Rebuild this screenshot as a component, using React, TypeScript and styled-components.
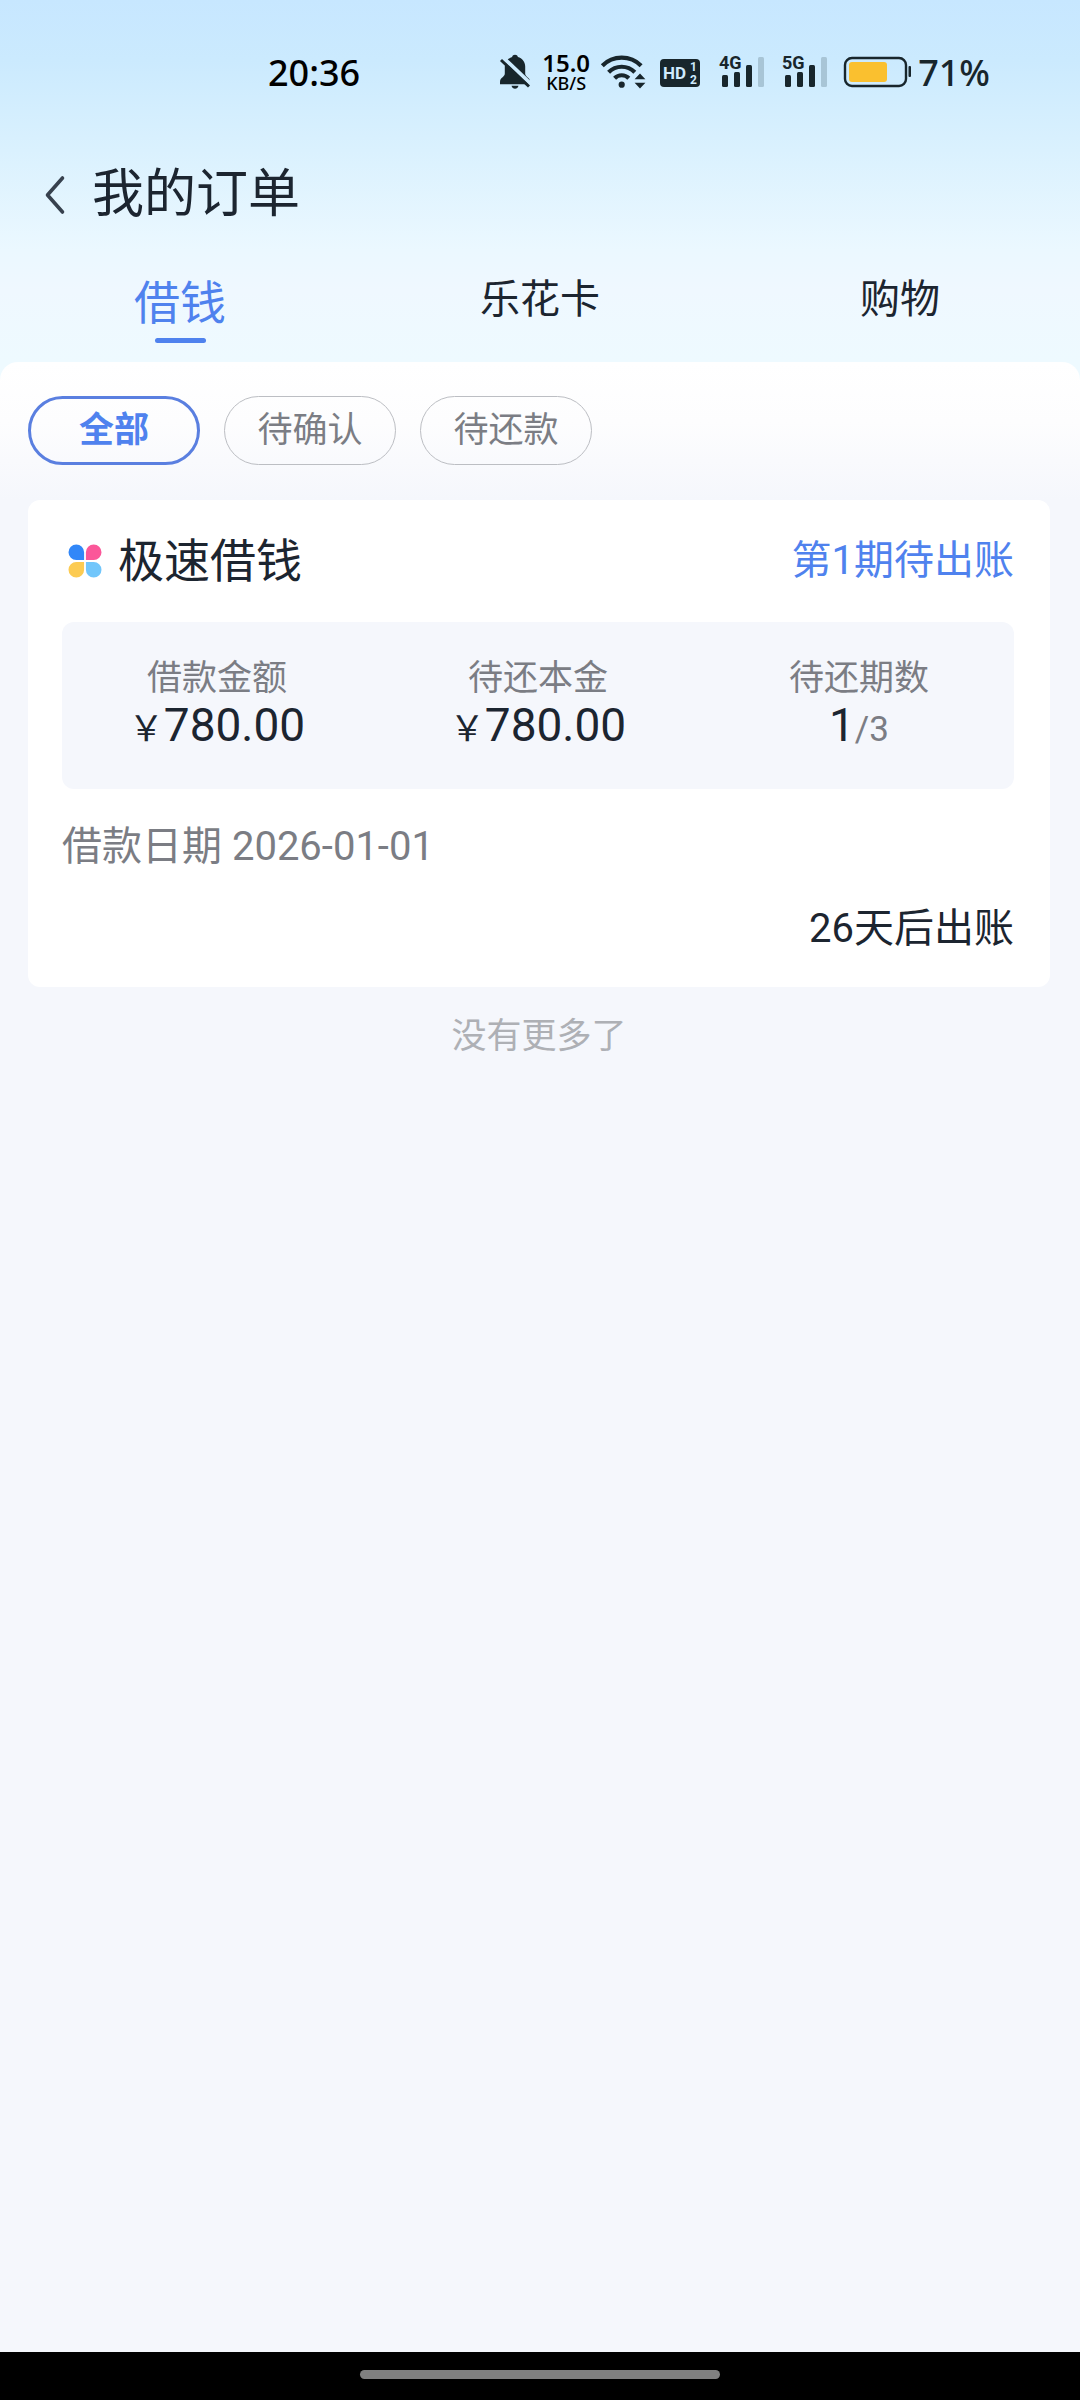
import React, { useState } from 'react';
import styled, { createGlobalStyle } from 'styled-components';

const ink = '#1c2530';
const statusInk = '#18262c';
const blue = '#4f82ee';
const grey = '#7b7d84';
const surface = '#f5f7fc';

const GlobalStyle = createGlobalStyle`
  * { box-sizing: border-box; }
  body {
    margin: 0;
    background: ${surface};
    color: ${ink};
    font-family: Roboto, "Noto Sans CJK SC", sans-serif;
  }
  button {
    margin: 0;
    padding: 0;
    border: 0;
    background: none;
    color: inherit;
    font: inherit;
    cursor: pointer;
  }
  svg { display: block; overflow: visible; }
`;

const Page = styled.div`
  display: flex;
  flex-direction: column;
  min-height: 100vh;
`;

const Top = styled.header`
  background: linear-gradient(180deg, #c7e7ff 0, #cbeafe 60px, #daf1fe 150px, #ebf8ff 250px, #eff8ff 290px, #eefaff 100%);
`;

const StatusBar = styled.div`
  display: flex;
  align-items: center;
  justify-content: space-between;
  height: 146px;
  padding: 0 90px 0 268px;
  font-family: "Noto Sans", sans-serif;
  font-weight: 500;
  font-size: 36px;
  line-height: 40px;
  color: ${statusInk};
`;

const Clock = styled.time`
  color: #000;
`;

const StatusIcons = styled.div`
  display: flex;
  align-items: center;
  gap: 12px;
`;

const NetSpeed = styled.div`
  display: flex;
  flex-direction: column;
  align-items: center;
  width: 46px;
  line-height: 20px;
  font-size: 18px;
  color: #000;
`;

const NetValue = styled.span`
  font-size: 24px;
  font-weight: 600;
`;

const TitleBar = styled.div`
  display: flex;
  align-items: center;
  gap: 26px;
  height: 98px;
  padding-left: 44px;
`;

const PageTitle = styled.h1`
  margin: 0;
  font-size: 52px;
  line-height: 64px;
  font-weight: 400;
`;

const Tabs = styled.nav`
  display: grid;
  grid-template-columns: repeat(3, 1fr);
  height: 118px;
  padding-top: 24px;
`;

const Tab = styled.button<{ $active: boolean }>`
  display: flex;
  flex-direction: column;
  align-items: center;
  height: 76px;
  font-size: ${(p) => (p.$active ? 46 : 40)}px;
  line-height: ${(p) => (p.$active ? 70 : 64)}px;
  color: ${(p) => (p.$active ? blue : ink)};

  &::after {
    content: "";
    display: ${(p) => (p.$active ? 'block' : 'none')};
    width: 51px;
    height: 5px;
    border-radius: 3px;
    background: ${blue};
  }
`;

const Panel = styled.div`
  background: #eefaff;
`;

const Filters = styled.div`
  display: flex;
  gap: 24px;
  padding: 34px 28px 35px;
  border-radius: 18px 18px 0 0;
  background: linear-gradient(180deg, #fff 0, #fdfdfe 60px, ${surface} 100%);
`;

const Chip = styled.button<{ $active: boolean }>`
  display: flex;
  align-items: center;
  justify-content: center;
  width: 172px;
  height: 69px;
  border: ${(p) => (p.$active ? `3px solid #5a7fe0` : '1px solid #bcbec3')};
  border-radius: 35px;
  font-size: 35px;
  line-height: 50px;
  font-weight: ${(p) => (p.$active ? 700 : 400)};
  color: ${(p) => (p.$active ? blue : grey)};
`;

const Orders = styled.main`
  flex: 1;
  padding: 0 30px 0 28px;
`;

const Card = styled.article`
  padding: 0 36px 34px 34px;
  border-radius: 12px;
  background: #fff;
`;

const CardHead = styled.div`
  display: flex;
  align-items: center;
  gap: 16px;
  height: 122px;
  padding-left: 6px;
`;

const CardTitle = styled.h2`
  margin: 0;
  font-size: 46px;
  line-height: 60px;
  font-weight: 400;
`;

const OrderState = styled.span`
  margin-left: auto;
  font-size: 40px;
  line-height: 60px;
  color: ${blue};
`;

const Stats = styled.dl`
  display: flex;
  justify-content: space-between;
  margin: 0;
  padding: 33px 65px 40px;
  border-radius: 12px;
  background: ${surface};
`;

const Stat = styled.div`
  width: 180px;
  text-align: center;
  line-height: 47px;
  white-space: nowrap;
`;

const StatLabel = styled.dt`
  font-size: 35px;
  color: ${grey};
`;

const StatValue = styled.dd`
  margin: 0;
  font-size: 46px;
`;

const Small = styled.span<{ $muted?: boolean }>`
  font-size: 35px;
  line-height: 1;
  color: ${(p) => (p.$muted ? grey : 'inherit')};
`;

const DateRow = styled.p`
  margin: 0;
  font-size: 40px;
  line-height: 116px;
  color: ${grey};
`;

const DueRow = styled.p`
  margin: 0;
  font-size: 40px;
  line-height: 48px;
  text-align: right;
`;

const ListEnd = styled.p`
  margin: 0;
  padding: 25px 0;
  font-size: 35px;
  line-height: 50px;
  text-align: center;
  color: #aeb0b5;
`;

const GestureBar = styled.footer`
  display: flex;
  justify-content: center;
  height: 48px;
  padding-top: 18px;
  background: #000;
`;

const GesturePill = styled.div`
  width: 33.3333%;
  height: 9px;
  border-radius: 5px;
  background: #808080;
`;

const Glyph = styled.text`
  font-family: Roboto, sans-serif;
  font-weight: 700;
`;

const MutedBell = () => (
  <svg width="32" height="44" viewBox="0 0 32 44" fill={statusInk} aria-hidden="true">
    <mask id="slash-gap">
      <rect width="32" height="44" fill="#fff" />
      <path d="M4 6.500 L33 34" stroke="#000" strokeWidth="4" />
    </mask>
    <g mask="url(#slash-gap)">
      <path d="M16 3.800c1.500 0 2.600.9 2.900 2.100 4.200 1.200 7.300 4.900 7.300 9.500v7.200c0 1.500.6 2.400 1.900 3.300 1.800 1.200 2.900 2.600 2.900 5v2.300H1v-2.300c0-2.400 1.100-3.800 2.900-5 1.300-.9 1.900-1.800 1.900-3.300v-7.200c0-4.600 3.100-8.300 7.300-9.500.3-1.200 1.400-2.100 2.900-2.100z" />
    </g>
    <path d="M12.500 34.800h7c-.5 1.800-1.800 2.900-3.500 2.900s-3-1.100-3.500-2.900z" />
    <path d="M2 9 L30 35.500" stroke={statusInk} strokeWidth="3" />
  </svg>
);

const Wifi = () => (
  <svg width="46" height="44" viewBox="0 0 46 44" fill="none" stroke={statusInk} strokeWidth="4.200" aria-hidden="true">
    <path d="M1.300 14.700a27.500 27.500 0 0 1 38.800 0" />
    <path d="M7.600 21.200a18.500 18.500 0 0 1 26.200 0" />
    <path d="M13.600 27.200a10 10 0 0 1 14.200 0" />
    <g fill={statusInk} stroke="none">
      <circle cx="20.700" cy="33.700" r="3.100" />
      <path d="M39 22.500l5.400 5.800H33.600zM39 37.500l5.400-5.800H33.600z" />
    </g>
  </svg>
);

const HdBadge = () => (
  <svg width="44" height="44" viewBox="0 0 44 44" aria-hidden="true">
    <rect x="1" y="8" width="40" height="28" rx="4" fill={statusInk} />
    <g fill="#cfebfe">
      <Glyph x="4" y="28" fontSize="17">HD</Glyph>
      <Glyph x="31" y="20" fontSize="12">1</Glyph>
      <Glyph x="31" y="33" fontSize="12">2</Glyph>
    </g>
  </svg>
);

const Signal = ({ label }: { label: string }) => (
  <svg width="51" height="44" viewBox="0 0 51 44" fill={statusInk} aria-hidden="true">
    <Glyph x="4" y="18" fontSize="18">{label}</Glyph>
    <rect x="7" y="24" width="6" height="12" rx="1.500" />
    <rect x="19" y="21" width="6" height="15" rx="1.500" />
    <rect x="31" y="14" width="6" height="22" rx="1.500" />
    <rect x="43" y="6" width="6" height="30" rx="1.500" fill="#a8c5d6" />
  </svg>
);

const Battery = () => (
  <svg width="65" height="44" viewBox="0 0 65 44" aria-hidden="true">
    <rect x="4" y="7" width="61" height="28" rx="7" fill="none" stroke={statusInk} strokeWidth="2.400" />
    <rect x="8" y="11" width="38" height="20" rx="3" fill="#fac02f" />
    <rect x="67.500" y="15" width="2.500" height="11" rx="1" fill={statusInk} />
  </svg>
);

const BackIcon = () => (
  <svg width="22" height="40" viewBox="0 0 22 40" fill="none" stroke="#37414e" strokeWidth="3.600" aria-hidden="true">
    <path d="M18.500 3 3.500 20l15 17" strokeLinecap="round" strokeLinejoin="round" />
  </svg>
);

const LoanIcon = () => (
  <svg width="34" height="34" viewBox="0 0 34 34" aria-hidden="true">
    <path d="M8.300.500a7.800 7.800 0 0 1 7.800 7.800v7.800H8.300a7.800 7.800 0 0 1 0-15.600z" fill="#3187f8" />
    <path d="M25.700.500a7.800 7.800 0 0 1 0 15.600h-7.800V8.300A7.800 7.800 0 0 1 25.700.500z" fill="#fb5799" />
    <path d="M8.300 33.500a7.800 7.800 0 0 1 0-15.600h7.800v7.800a7.800 7.800 0 0 1-7.800 7.800z" fill="#fccb52" />
    <path d="M25.700 33.500a7.800 7.800 0 0 1-7.800-7.800v-7.800h7.800a7.800 7.800 0 0 1 0 15.600z" fill="#71c6fb" />
  </svg>
);

const tabs = ['借钱', '乐花卡', '购物'];
const filters = ['全部', '待确认', '待还款'];

export default function App() {
  const [tab, setTab] = useState(tabs[0]);
  const [filter, setFilter] = useState(filters[0]);

  return (
    <Page>
      <GlobalStyle />
      <Top>
        <StatusBar>
          <Clock>20:36</Clock>
          <StatusIcons>
            <MutedBell />
            <NetSpeed>
              <NetValue>15.0</NetValue>
              <span>KB/S</span>
            </NetSpeed>
            <Wifi />
            <HdBadge />
            <Signal label="4G" />
            <Signal label="5G" />
            <Battery />
            <span>71%</span>
          </StatusIcons>
        </StatusBar>
        <TitleBar>
          <button type="button" aria-label="返回">
            <BackIcon />
          </button>
          <PageTitle>我的订单</PageTitle>
        </TitleBar>
        <Tabs>
          {tabs.map((name) => (
            <Tab key={name} type="button" $active={name === tab} aria-pressed={name === tab} onClick={() => setTab(name)}>
              {name}
            </Tab>
          ))}
        </Tabs>
      </Top>
      <Panel>
        <Filters>
          {filters.map((name) => (
            <Chip key={name} type="button" $active={name === filter} aria-pressed={name === filter} onClick={() => setFilter(name)}>
              {name}
            </Chip>
          ))}
        </Filters>
      </Panel>
      <Orders>
        <Card>
          <CardHead>
            <LoanIcon />
            <CardTitle>极速借钱</CardTitle>
            <OrderState>第1期待出账</OrderState>
          </CardHead>
          <Stats>
            <Stat>
              <StatLabel>借款金额</StatLabel>
              <StatValue><Small>￥</Small>780.00</StatValue>
            </Stat>
            <Stat>
              <StatLabel>待还本金</StatLabel>
              <StatValue><Small>￥</Small>780.00</StatValue>
            </Stat>
            <Stat>
              <StatLabel>待还期数</StatLabel>
              <StatValue>1<Small $muted>/3</Small></StatValue>
            </Stat>
          </Stats>
          <DateRow>借款日期 2026-01-01</DateRow>
          <DueRow>26天后出账</DueRow>
        </Card>
        <ListEnd>没有更多了</ListEnd>
      </Orders>
      <GestureBar>
        <GesturePill />
      </GestureBar>
    </Page>
  );
}
